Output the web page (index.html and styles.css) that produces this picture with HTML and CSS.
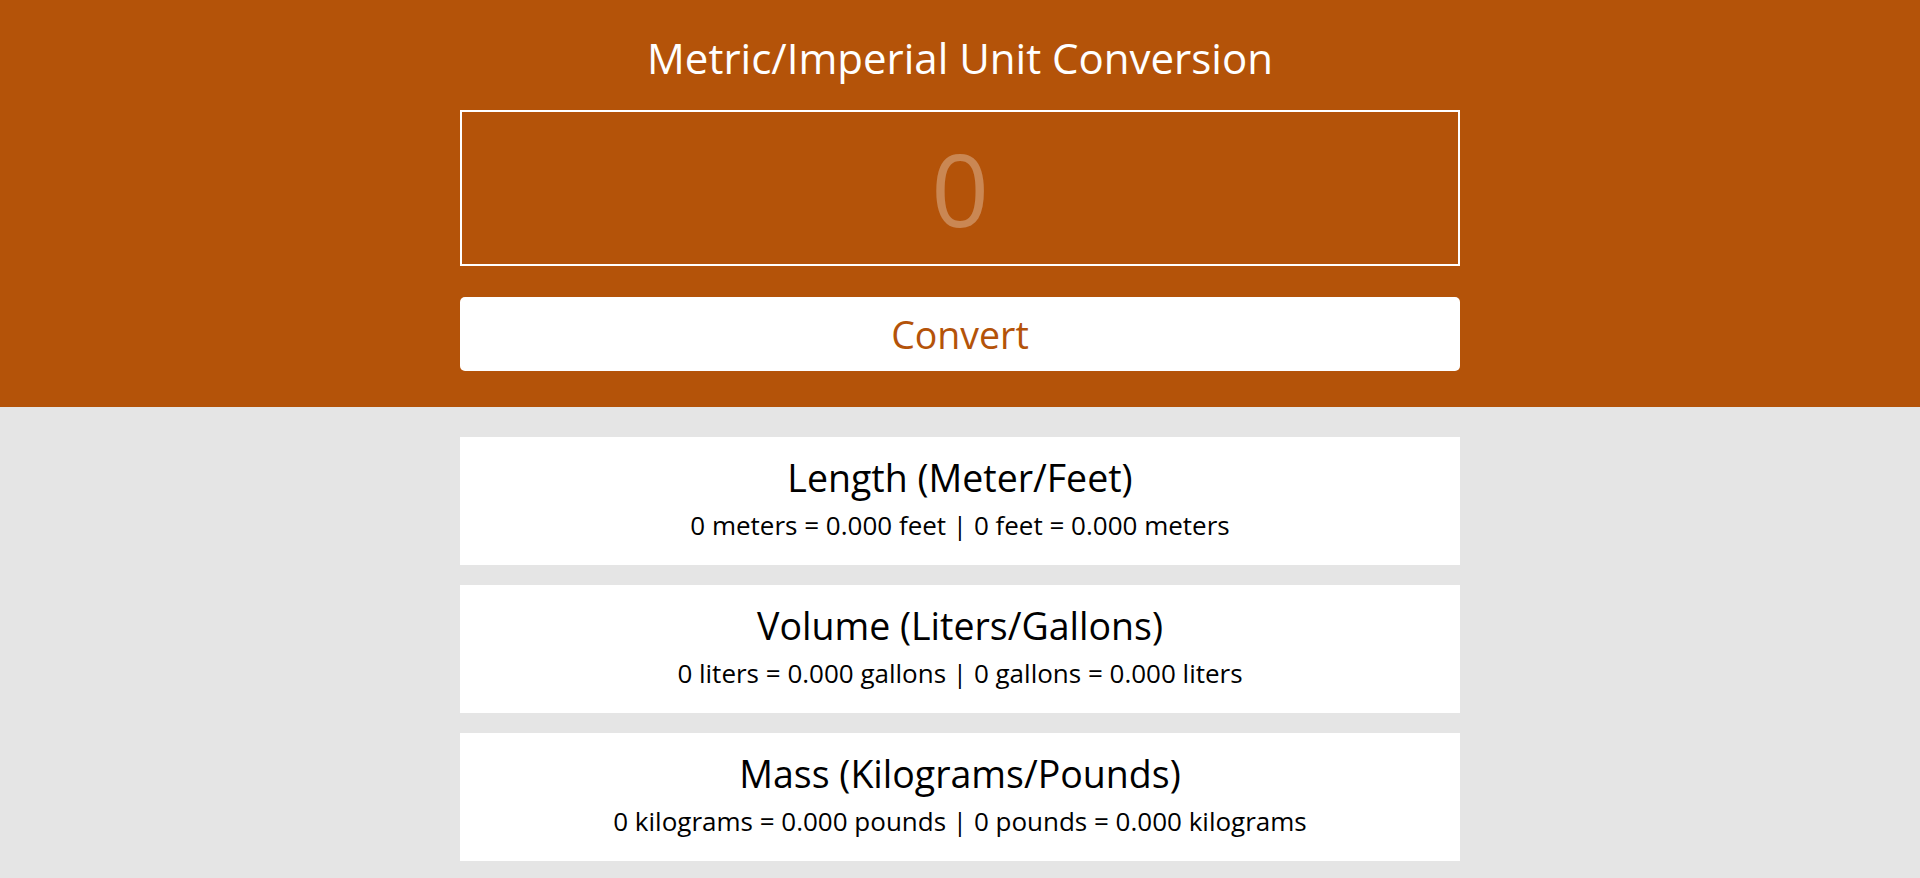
FILE: index.html
```html
<!DOCTYPE html>
<html lang="en">
<head>
<meta charset="utf-8">
<title>Metric/Imperial Unit Conversion</title>
<link rel="stylesheet" href="styles.css">
</head>
<body>
<header class="hero">
  <h1 class="hero-title">Metric/Imperial Unit Conversion</h1>
  <input class="hero-input" type="number" placeholder="0">
  <button class="hero-button" type="button">Convert</button>
</header>
<main class="results">
  <section class="card">
    <h2 class="card-title">Length (Meter/Feet)</h2>
    <p class="card-text">0 meters = 0.000 feet | 0 feet = 0.000 meters</p>
  </section>
  <section class="card">
    <h2 class="card-title">Volume (Liters/Gallons)</h2>
    <p class="card-text">0 liters = 0.000 gallons | 0 gallons = 0.000 liters</p>
  </section>
  <section class="card">
    <h2 class="card-title">Mass (Kilograms/Pounds)</h2>
    <p class="card-text">0 kilograms = 0.000 pounds | 0 pounds = 0.000 kilograms</p>
  </section>
</main>
</body>
</html>
```
FILE: styles.css
```css
* { box-sizing: border-box; }
html, body {
  margin: 0;
  padding: 0;
  background: #e5e5e5;
  font-family: "Open Sans", "Noto Sans", sans-serif;
}
.hero {
  background: #b45309;
  display: flex;
  flex-direction: column;
  align-items: center;
  padding: 29px 0 36px;
  height: 407px;
}
.hero-title {
  margin: 0 0 24px;
  color: #ffffff;
  font-size: 42px;
  font-weight: 400;
  line-height: 57px;
}
.hero-input {
  width: 1000px;
  height: 156px;
  border: 2px solid #ffffff;
  background: transparent;
  color: #ffffff;
  font-family: inherit;
  font-size: 101px;
  text-align: center;
  outline: none;
  padding: 0;
  -moz-appearance: textfield;
}
.hero-input::placeholder { color: rgba(255, 255, 255, 0.3); }
.hero-input::-webkit-outer-spin-button,
.hero-input::-webkit-inner-spin-button { -webkit-appearance: none; margin: 0; }
.hero-button {
  margin-top: 31px;
  width: 1000px;
  height: 74px;
  border: none;
  border-radius: 5px;
  background: #ffffff;
  color: #b45309;
  font-family: inherit;
  font-size: 37.5px;
  padding: 0;
}
.results {
  display: flex;
  flex-direction: column;
  align-items: center;
  gap: 20px;
  padding-top: 30px;
}
.card {
  width: 1000px;
  height: 128px;
  background: #ffffff;
  text-align: center;
  padding: 14.5px 0 0;
}
.card-title {
  margin: 0 0 5px;
  font-size: 37.5px;
  font-weight: 400;
  line-height: 51px;
  color: #000000;
}
.card-text {
  margin: 0;
  font-size: 26px;
  line-height: 35px;
  color: #000000;
}
```
